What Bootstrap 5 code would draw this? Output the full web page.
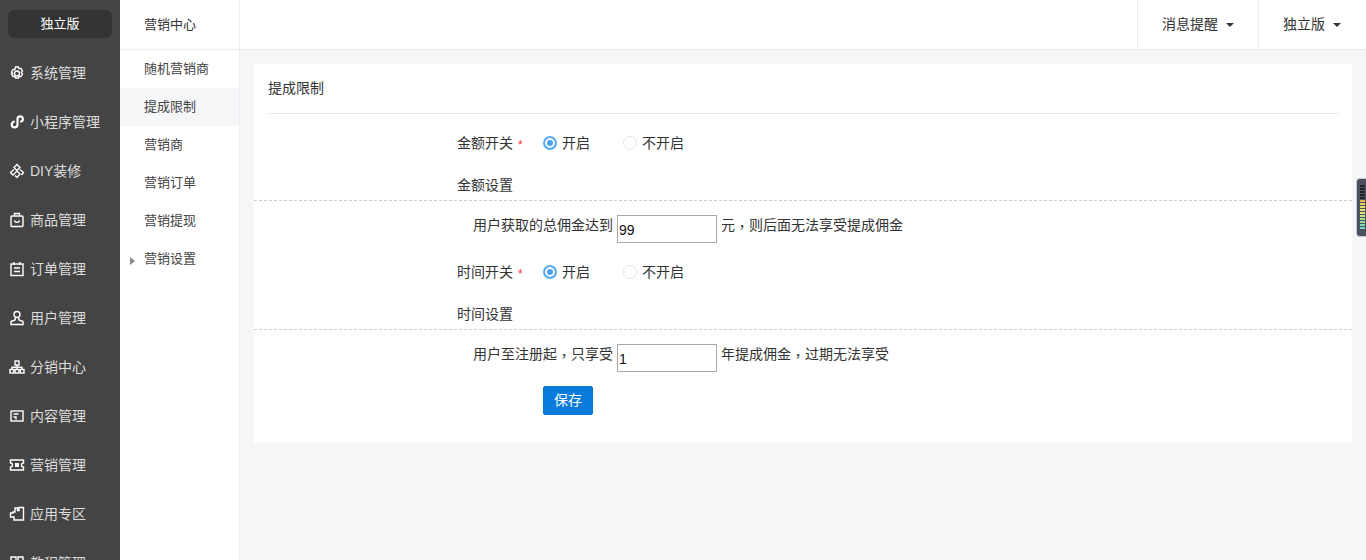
<!DOCTYPE html>
<html lang="zh-CN">
<head>
<meta charset="utf-8">
<title>提成限制</title>
<link href="https://cdn.jsdelivr.net/npm/bootstrap@5.3.0/dist/css/bootstrap.min.css" rel="stylesheet">
<style>
body{font-family:"Liberation Sans","Noto Sans CJK SC",sans-serif;font-size:14px;color:#333;background:#f5f6f8;height:560px}
.side-main{width:120px;background:#444;flex:none;height:560px;overflow:hidden}
.brand-box{margin:10px 8px 0;height:28px;line-height:28px;background:#333;border-radius:6px;color:#fff;text-align:center;font-size:13px;margin-bottom:10.5px}
.side-item{height:49px;color:#ddd;padding-left:9px;gap:5px}
.side-item svg{width:16px;height:16px;flex:none;fill:none;stroke:#fff;stroke-width:1.4}
.side-sub{width:120px;flex:none;background:#fff;border-right:1px solid #eaecef;height:560px;font-size:13px}
.sub-head{height:50px;line-height:49px;padding-left:24px;border-bottom:1px solid #eaecef}
.sub-item{height:38px;line-height:37px;padding-left:24px;position:relative;color:#444}
.sub-item.is-on{background:#f5f6f8}
.sub-arrow{position:absolute;left:10px;top:17px;width:0;height:0;border-left:5px solid #888;border-top:4px solid transparent;border-bottom:4px solid transparent}
.top-strip{height:50px;background:#fff;border-bottom:1px solid #eaecef}
.top-link{height:49px;border-left:1px solid #eaecef;color:#333;text-decoration:none;padding:0 24px}
.top-link:last-child{padding-right:25px}
.top-link.dropdown-toggle::after{margin-left:8px;vertical-align:.18em;border-top-width:4.5px;border-left-width:4.5px;border-right-width:4.5px;border-bottom:0}
.panel{margin:14px 14px 0;background:#fff;height:379px;padding:0 14px}
.panel-title{height:50px;line-height:48px;border-bottom:1px solid #e8e8e8;margin-bottom:14px}
.form-zone{padding-left:189px}
.f-row{height:30px}
.f-label{width:86px;flex:none}
.f-req{color:#f33;font-size:12px;margin-left:5px;vertical-align:-1px}
.f-radio{width:80px;gap:5px;flex:none}
.f-dot{width:14px;height:14px;border-radius:50%;border:1px solid #e4e4e4;background:#fff;flex:none}
.f-dot.is-on{border:2px solid #5cadf5;box-shadow:inset 0 0 0 2px #fff;background:#4a9ff0}
.f-section{height:30px;line-height:30px;margin-top:12px}
.f-dash{border-top:1px dashed #ccc;margin:0 -14px 14px}
.f-line{height:28px;padding-left:16px;gap:4px;line-height:21px}
.f-input{width:100px;height:28px;border:1px solid #a9a9a9;padding:1px 1px 0;font:14px "Liberation Sans",sans-serif;color:#111;border-radius:0;outline:0}
.f-comma{font-family:"Noto Sans CJK TC",sans-serif;vertical-align:-2px}
.gap-row{margin-top:14px}
.save-btn{margin:14px 0 0 86px;width:50px;height:29px;padding:0;font-size:14px;background:#0b7bdb;border-color:#0b7bdb;border-radius:2px;color:#fff}
.side-handle{position:fixed;right:0;top:178px;width:10px;height:59px;background:#4b5160;border-radius:4px 0 0 4px;padding:6px 1px 0 3px;border:1px solid #c4c8d0;border-right:0}
.side-handle i{display:block;height:1.5px;margin-bottom:1.5px}
</style>
</head>
<body class="overflow-hidden">
<div class="d-flex">
  <aside class="side-main">
    <div class="brand-box">独立版</div>
    <div class="side-item d-flex align-items-center"><svg viewBox="0 0 16 16"><path d="M6.500 1.500h3l.7 1.700 1.800-.3 1.500 2.600-1.100 1.500 1.100 1.500-1.500 2.600-1.800-.3-.7 1.700h-3l-.7-1.700-1.800.3-1.500-2.600L3.600 8 2.500 6.500 4 3.900l1.800.3z" transform="translate(0 .5)"/><circle cx="8" cy="8.500" r="2.500"/></svg>系统管理</div>
    <div class="side-item d-flex align-items-center"><svg viewBox="0 0 16 16"><path d="M8.500 10.500a2.900 2.900 0 1 1-2.900-2.900M8.500 10.500V5a2.700 2.700 0 1 1 2.700 2.700" stroke-width="2.200"/></svg>小程序管理</div>
    <div class="side-item d-flex align-items-center"><svg viewBox="0 0 16 16"><path d="M8 1.500l3 3-3 3-3-3zM5 6.500L1.500 9.500 4 12l4-4 3 3-3 3.500-2-2M11 6.500l3.500 3L12.500 12"/></svg>DIY装修</div>
    <div class="side-item d-flex align-items-center"><svg viewBox="0 0 16 16"><rect x="2" y="4" width="12" height="10.500" rx="1"/><path d="M5.500 4V1.500h5V4M5.500 8.500c.5 2.500 4.500 2.500 5 0"/></svg>商品管理</div>
    <div class="side-item d-flex align-items-center"><svg viewBox="0 0 16 16"><rect x="2" y="3" width="12" height="11.500"/><path d="M5 1v3M11 1v3M5 7h6M5 10.500h6"/></svg>订单管理</div>
    <div class="side-item d-flex align-items-center"><svg viewBox="0 0 16 16"><circle cx="8" cy="4.500" r="3"/><path d="M6.500 7.500L6 10l-4 1.500v3h12v-3L10 10l-.5-2.500"/></svg>用户管理</div>
    <div class="side-item d-flex align-items-center"><svg viewBox="0 0 16 16"><rect x="6" y="2" width="4" height="4"/><rect x="1" y="10.500" width="3.800" height="3.500"/><rect x="6.100" y="10.500" width="3.800" height="3.500"/><rect x="11.200" y="10.500" width="3.800" height="3.500"/><path d="M3 10.500V8.200h10v2.300M8 6v4.500"/></svg>分销中心</div>
    <div class="side-item d-flex align-items-center"><svg viewBox="0 0 16 16"><rect x="2" y="3" width="12" height="10"/><path d="M4.500 6h5M4.500 9h2.500v2.500" /></svg>内容管理</div>
    <div class="side-item d-flex align-items-center"><svg viewBox="0 0 16 16"><path d="M1.500 3h13v3a2 2 0 0 0 0 4v3h-13v-3a2 2 0 0 0 0-4z"/><rect x="6" y="6" width="4" height="4" fill="#fff" stroke="none"/></svg>营销管理</div>
    <div class="side-item d-flex align-items-center"><svg viewBox="0 0 16 16"><path d="M6 6V2h2.500v2.500H10V1.500h4.500V14H5v-3H1.500V7H4V6z"/></svg>应用专区</div>
    <div class="side-item d-flex align-items-center"><svg viewBox="0 0 16 16"><path d="M2 2h5v12H2zM9 2h5v12H9z"/></svg>教程管理</div>
  </aside>
  <nav class="side-sub">
    <div class="sub-head">营销中心</div>
    <div class="sub-item">随机营销商</div>
    <div class="sub-item is-on">提成限制</div>
    <div class="sub-item">营销商</div>
    <div class="sub-item">营销订单</div>
    <div class="sub-item">营销提现</div>
    <div class="sub-item"><span class="sub-arrow"></span>营销设置</div>
  </nav>
  <div class="flex-grow-1">
    <header class="top-strip d-flex justify-content-end">
      <a class="top-link dropdown-toggle d-flex align-items-center" href="#">消息提醒</a>
      <a class="top-link dropdown-toggle d-flex align-items-center" href="#">独立版</a>
    </header>
    <main class="panel">
      <div class="panel-title">提成限制</div>
      <form class="form-zone">
        <div class="f-row d-flex align-items-center">
          <div class="f-label">金额开关<span class="f-req">*</span></div>
          <div class="f-radio d-flex align-items-center"><span class="f-dot is-on"></span>开启</div>
          <div class="f-radio d-flex align-items-center"><span class="f-dot"></span>不开启</div>
        </div>
        <div class="f-section">金额设置</div>
      </form>
      <div class="f-dash"></div>
      <form class="form-zone">
        <div class="f-line d-flex align-items-start"><span>用户获取的总佣金达到</span><input class="f-input" value="99" aria-label="总佣金"><span>元<span class="f-comma" lang="zh-TW">，</span>则后面无法享受提成佣金</span></div>
        <div class="f-row d-flex align-items-center gap-row">
          <div class="f-label">时间开关<span class="f-req">*</span></div>
          <div class="f-radio d-flex align-items-center"><span class="f-dot is-on"></span>开启</div>
          <div class="f-radio d-flex align-items-center"><span class="f-dot"></span>不开启</div>
        </div>
        <div class="f-section">时间设置</div>
      </form>
      <div class="f-dash"></div>
      <form class="form-zone">
        <div class="f-line d-flex align-items-start"><span>用户至注册起<span class="f-comma" lang="zh-TW">，</span>只享受</span><input class="f-input" value="1" aria-label="年"><span>年提成佣金<span class="f-comma" lang="zh-TW">，</span>过期无法享受</span></div>
        <button type="button" class="btn btn-primary save-btn">保存</button>
      </form>
    </main>
  </div>
</div>
<div class="side-handle">
  <i class="bg-dark"></i><i class="bg-dark"></i><i class="bg-dark"></i><i class="bg-dark"></i><i class="bg-dark"></i>
  <i style="background:#e8b84f"></i><i style="background:#e8d35f"></i><i style="background:#e8e06a"></i><i style="background:#e4e46c"></i><i style="background:#dfe56f"></i><i style="background:#c5e47a"></i><i style="background:#a4e28c"></i><i style="background:#8fe0a0"></i><i style="background:#7fdcb5"></i><i style="background:#72d8c8"></i>
</div>
</body>
</html>
